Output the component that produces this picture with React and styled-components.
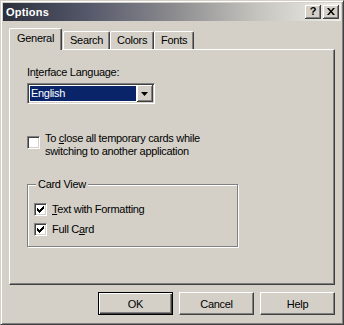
import React from 'react';
import styled, { createGlobalStyle } from 'styled-components';

const Global = createGlobalStyle`
  html, body { margin: 0; padding: 0; background: #d4d0c8; }
  body {
    font-family: "Liberation Sans", Arial, sans-serif;
    font-size: 11px;
    letter-spacing: -0.3px;
    color: #000;
  }
  * { box-sizing: border-box; }
`;

const Window = styled.div`
  width: 344px;
  height: 325px;
  background: #d4d0c8;
  border: 1px solid;
  border-color: #d4d0c8 #404040 #404040 #d4d0c8;
  box-shadow: inset 1px 1px 0 #fff, inset -1px -1px 0 #808080;
  padding: 2px;
  display: flex;
  flex-direction: column;
`;

const TitleBar = styled.div`
  height: 18px;
  display: flex;
  align-items: center;
  justify-content: space-between;
  padding: 0 2px 0 3px;
  background: linear-gradient(90deg, #2b2f3d 0%, #55586a 25%, #8a8a8e 50%, #c4c3bd 75%, #f0eee8 100%);
`;

const Title = styled.span`
  color: #fff;
  font-weight: bold;
  font-size: 11px;
  letter-spacing: 0.2px;
`;

const TitleButtons = styled.div`
  display: flex;
  gap: 2px;
`;

const CaptionButton = styled.div`
  width: 16px;
  height: 14px;
  background: #d4d0c8;
  box-shadow: inset -1px -1px 0 #404040, inset 1px 1px 0 #fff, inset -2px -2px 0 #808080;
  display: flex;
  align-items: center;
  justify-content: center;
  font-weight: bold;
  font-size: 11px;
  line-height: 1;
  padding-bottom: 1px;
`;

const Body = styled.div`
  flex: 1;
  display: flex;
  flex-direction: column;
  padding: 7px 6px 0 6px;
`;

const TabRow = styled.div`
  height: 21px;
  display: flex;
  align-items: flex-end;
  position: relative;
  z-index: 1;
`;

const Tab = styled.div`
  height: ${p => (p.$active ? '22px' : '18px')};
  margin-bottom: ${p => (p.$active ? '-1px' : '0')};
  padding: ${p => (p.$active ? '3px 7px 0 7px' : '2px 6px 0 6px')};
  margin-right: ${p => (p.$active ? '1px' : '0')};
  background: #d4d0c8;
  border-left: 1px solid #fff;
  border-top: 1px solid #fff;
  border-right: 1px solid #404040;
  border-top-left-radius: 2px;
  border-top-right-radius: 2px;
  box-shadow: inset -1px 0 0 #808080;
  white-space: nowrap;
`;

const Panel = styled.div`
  height: 236px;
  border: 1px solid;
  border-color: #fff #404040 #404040 #fff;
  box-shadow: inset -1px -1px 0 #808080;
  padding: 16px 17px 0 17px;
  display: flex;
  flex-direction: column;
  align-items: flex-start;
`;

const Label = styled.div`
  line-height: 13px;
`;

const SelectBox = styled.div`
  margin-top: 4px;
  width: 128px;
  height: 21px;
  display: flex;
  padding: 1px;
  background: #fff;
  border: 1px solid;
  border-color: #808080 #fff #fff #808080;
  box-shadow: inset 1px 1px 0 #404040, inset -1px -1px 0 #d4d0c8;
`;

const SelectValue = styled.div`
  flex: 1;
  margin: 1px;
  background: #0a246a;
  color: #fff;
  line-height: 15px;
  padding-left: 1px;
`;

const ArrowButton = styled.div`
  width: 16px;
  height: 17px;
  background: #d4d0c8;
  box-shadow: inset -1px -1px 0 #404040, inset 1px 1px 0 #fff, inset -2px -2px 0 #808080;
  display: flex;
  align-items: center;
  justify-content: center;
  padding-right: 1px;
`;

const CheckRow = styled.label`
  display: flex;
  align-items: ${p => (p.$top ? 'flex-start' : 'center')};
  gap: 5px;
  margin-top: ${p => p.$mt || 0}px;
  line-height: 13px;
`;

const Box = styled.span`
  flex: none;
  width: 13px;
  height: 13px;
  margin-top: ${p => p.$mt || 0}px;
  background: #fff;
  border: 1px solid;
  border-color: #808080 #fff #fff #808080;
  box-shadow: inset 1px 1px 0 #404040, inset -1px -1px 0 #d4d0c8;
  display: flex;
  align-items: center;
  justify-content: center;
`;

const Group = styled.fieldset`
  margin: 20px 0 0 0;
  width: 211px;
  height: 69px;
  padding: 12px 6px 0 6px;
  border: 1px solid #808080;
  box-shadow: 1px 1px 0 #fff, inset 1px 1px 0 #fff;
  display: flex;
  flex-direction: column;
  gap: 7px;
`;

const Legend = styled.legend`
  margin-left: 2px;
  padding: 0 2px;
  line-height: 13px;
  background: #d4d0c8;
`;

const ButtonRow = styled.div`
  margin-top: 7px;
  display: flex;
  justify-content: flex-end;
  gap: 6px;
`;

const Button = styled.div`
  width: 75px;
  height: 23px;
  display: flex;
  align-items: center;
  justify-content: center;
  background: #d4d0c8;
  border: 1px solid;
  border-color: ${p => (p.$default ? '#000' : '#fff #404040 #404040 #fff')};
  box-shadow: ${p =>
    p.$default
      ? 'inset 1px 1px 0 #fff, inset -1px -1px 0 #404040, inset -2px -2px 0 #808080'
      : 'inset -1px -1px 0 #808080'};
`;

const Check = () => (
  <svg width="7" height="7" viewBox="0 0 7 7">
    <path d="M0 2H1V3H2V4H3V3H4V2H5V1H6V0H7V3H6V4H5V5H4V6H3V7H2V6H1V5H0Z" fill="#000" />
  </svg>
);

const Checkbox = ({ checked, mt }) => <Box $mt={mt}>{checked && <Check />}</Box>;

export default function App() {
  return (
    <>
      <Global />
      <Window>
        <TitleBar>
          <Title>Options</Title>
          <TitleButtons>
            <CaptionButton>?</CaptionButton>
            <CaptionButton>
              <svg width="8" height="7" viewBox="0 0 8 7">
                <path d="M0 0h2l2 2.5L6 0h2L5 3.5 8 7H6L4 4.5 2 7H0l3-3.5z" fill="#000" />
              </svg>
            </CaptionButton>
          </TitleButtons>
        </TitleBar>
        <Body>
          <TabRow>
            <Tab $active>General</Tab>
            <Tab>Search</Tab>
            <Tab>Colors</Tab>
            <Tab>Fonts</Tab>
          </TabRow>
          <Panel>
            <Label>In<u>t</u>erface Language:</Label>
            <SelectBox>
              <SelectValue>English</SelectValue>
              <ArrowButton>
                <svg width="7" height="4" viewBox="0 0 7 4">
                  <path d="M0 0h7L3.5 4z" fill="#000" />
                </svg>
              </ArrowButton>
            </SelectBox>
            <CheckRow $top $mt={28}>
              <Checkbox mt={4} />
              <span>
                To <u>c</u>lose all temporary cards while
                <br />
                switching to another application
              </span>
            </CheckRow>
            <Group>
              <Legend>Card View</Legend>
              <CheckRow>
                <Checkbox checked />
                <span><u>T</u>ext with Formatting</span>
              </CheckRow>
              <CheckRow>
                <Checkbox checked />
                <span>Full C<u>a</u>rd</span>
              </CheckRow>
            </Group>
          </Panel>
          <ButtonRow>
            <Button $default>OK</Button>
            <Button>Cancel</Button>
            <Button>Help</Button>
          </ButtonRow>
        </Body>
      </Window>
    </>
  );
}
